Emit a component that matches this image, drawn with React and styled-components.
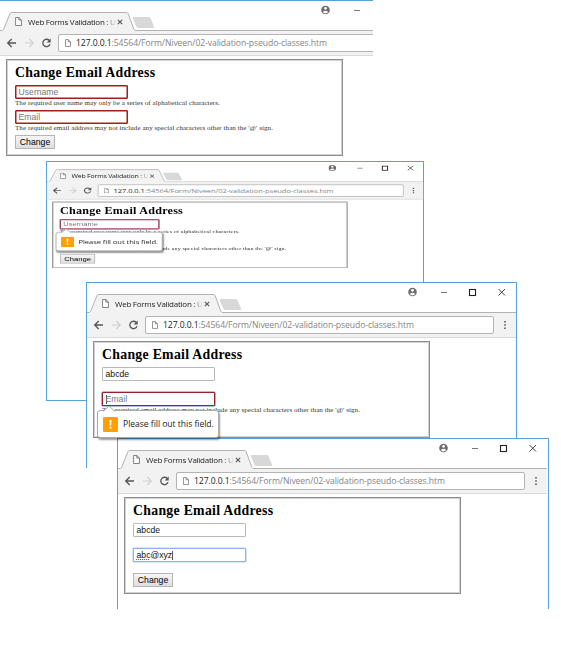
import React from "react";
import styled, { createGlobalStyle, css } from "styled-components";

const GlobalStyle = createGlobalStyle`
  * { box-sizing: border-box; }
  body { margin: 0; background: #fff; overflow: hidden; }
`;

const Desktop = styled.main`
  position: relative;
  width: 561px;
  height: 646px;
  overflow: hidden;
  background: #fff;
`;

const Frame = styled.section`
  position: absolute;
  left: ${(p) => p.$x}px;
  top: ${(p) => p.$y}px;
  width: ${(p) => p.$w}px;
  height: ${(p) => p.$h}px;
  background: #fff;
  border: 1px solid #56a3dc;
  ${(p) => !p.$closed && css`border-bottom: 0;`}
  ${(p) => p.$cut && css`border-left-color: #fff; border-right: 0; overflow: hidden;`}
`;

const Content = styled.div`
  width: 430px;
  margin: -1px 0 0 -1px;
  transform-origin: 0 0;
  ${(p) => p.$squashed && css`transform: scale(0.877, 0.688);`}
`;

const TitleBar = styled.header`
  position: relative;
  display: grid;
  grid-template-columns: 16px 13px 96px 1fr auto;
  height: 31px;
`;

const TabShape = styled.svg`
  position: absolute;
  left: 1px;
  top: 1px;
  width: 429px;
  height: 30px;
`;

const TabIcon = styled.svg`
  position: relative;
  grid-column: 2;
  width: 7px;
  height: 9px;
  margin-top: 17px;
`;

const TabTitle = styled.span`
  position: relative;
  margin-top: 15.5px;
  width: 90px;
  white-space: nowrap;
  font: 8px/12px "Open Sans", sans-serif;
  letter-spacing: -0.25px;
  color: #1c1c1c;
  mask-image: linear-gradient(90deg, #000 78px, transparent 88px);
`;

const TabClose = styled.svg`
  position: relative;
  width: 6px;
  height: 6px;
  margin: 19px 0 0 -7px;
`;

const Controls = styled.svg`
  position: relative;
  width: 108px;
  height: 12px;
  margin: 4px -0.2px 0 0;
`;

const Toolbar = styled.div`
  display: flex;
  align-items: center;
  height: 25px;
  margin-left: 1px;
  padding: 0 0 1px 6px;
  background: #f2f2f2;
  border-bottom: 1px solid #dadada;
`;

const NavIcons = styled.svg`
  flex: none;
  width: 46px;
  height: 12px;
`;

const Address = styled.div`
  display: flex;
  align-items: center;
  width: 349px;
  height: 18px;
  margin: 1px 0 0 6px;
  padding-left: 6px;
  background: #fff;
  border: 1px solid #b4b4b4;
  border-radius: 2px;
  font: 8.6px/16px "Open Sans", sans-serif;
  letter-spacing: -0.075px;
  color: #858585;
  white-space: nowrap;
`;

const AddressIcon = styled.svg`
  width: 6px;
  height: 8px;
  margin-right: 5px;
`;

const Host = styled.span`
  color: #222;
`;

const Menu = styled.svg`
  width: 4px;
  height: 10px;
  margin-left: 9px;
`;

const Panel = styled.div`
  width: 337px;
  height: 97px;
  margin: 3px 0 0 7px;
  padding: 1px 0 0 8px;
  border: 1px solid #8e8e8e;
  box-shadow: inset 0 0 0 1px #d2d2d2;
`;

const Heading = styled.h1`
  margin: 0;
  height: 24px;
  font: bold 13.8px/23px "Liberation Serif", serif;
  letter-spacing: 0.28px;
  color: #000;
  white-space: nowrap;
`;

const Field = styled.div`
  position: relative;
  height: 25px;
`;

const edges = {
  normal: css`border: 1px solid #b9b9b9;`,
  invalid: css`border: 1px solid #a31e18; box-shadow: inset 0 0 0 0.5px #a31e18;`,
  active: css`border: 1px solid #8db2ee; box-shadow: 0 0 0 0.6px #b5ccf5;`,
  required: css`border: 1px solid #93242f; box-shadow: 0 0 0 0.6px #6c7cb8;`,
};

const Input = styled.div`
  display: flex;
  align-items: center;
  width: 113px;
  height: 13.5px;
  padding: 1.5px 0 0 2.6px;
  background: #fff;
  border-radius: 1px;
  ${(p) => edges[p.$edge]}
  font: 8.6px/11px "Liberation Sans", sans-serif;
  color: ${(p) => (p.$placeholder ? "#777" : "#111")};
`;

const Misspelt = styled.span`
  text-decoration: underline dotted #e04040 1px;
  text-underline-offset: 1px;
`;

const Caret = styled.i`
  width: 1px;
  height: 9px;
  margin-right: -1px;
  background: #555;
`;

const Hint = styled.p`
  margin: 0;
  font: 7px/9px "Liberation Serif", serif;
  letter-spacing: 0.065px;
  color: #333;
  white-space: nowrap;
`;

const Button = styled.button`
  display: block;
  width: 40px;
  height: 14px;
  padding: 0;
  border: 1px solid #b5b5b5;
  border-radius: 0;
  background: linear-gradient(#f6f6f6, #dedede);
  font: 8.7px/12px "Liberation Sans", sans-serif;
  color: #000;
`;

const Bubble = styled.div`
  position: absolute;
  z-index: 1;
  left: -5px;
  top: 18px;
  display: flex;
  align-items: center;
  width: 122px;
  height: 28px;
  padding-left: 5px;
  background: #fff;
  border: 1px solid #aaa;
  border-radius: 3px;
  box-shadow: 1px 2px 2px rgba(0, 0, 0, 0.4);
  font: 8.6px/14px "Open Sans", sans-serif;
  letter-spacing: -0.04px;
  color: #222;
  white-space: nowrap;
`;

const BubbleArrow = styled.svg`
  position: absolute;
  left: 4px;
  top: -6px;
  width: 14px;
  height: 7px;
`;

const Warning = styled.svg`
  flex: none;
  width: 15px;
  height: 15px;
  margin-right: 5px;
`;

const PagePath = () => (
  <path d="M.6.5h3.2L6.4 3v5.5H.6zM3.8.5V3h2.6" fill="#fff" stroke="#666" strokeWidth=".8" />
);

const NAME_HINT = "The required user name may only be a series of alphabetical characters.";
const EMAIL_HINT =
  "The required email address may not include any special characters other than the '@' sign.";

function FormField({ value, placeholder, edge, hint, bubble, caret, misspelt }) {
  return (
    <Field>
      <Input $edge={edge} $placeholder={!value}>
        {caret === "start" && <Caret />}
        {misspelt && <Misspelt>{misspelt}</Misspelt>}
        {value || placeholder}
        {caret === "end" && <Caret />}
      </Input>
      {hint && <Hint>{hint}</Hint>}
      {bubble && (
        <Bubble>
          <BubbleArrow viewBox="0 0 14 7">
            <path d="M1 6.5 7 1l6 5.5V7H1z" fill="#fff" />
            <path d="M1 6.5 7 1l6 5.5" fill="none" stroke="#aaa" />
          </BubbleArrow>
          <Warning viewBox="0 0 15 15">
            <rect width="15" height="15" rx="1" fill="#ffa000" />
            <path d="M6.5 3h2l-.3 5.5H6.8zM6.6 9.8h1.8v1.9H6.6z" fill="#fff" />
          </Warning>
          Please fill out this field.
        </Bubble>
      )}
    </Field>
  );
}

function BrowserWindow({ frame, cut, closed, squashed, fields }) {
  const [x, y, w, h] = frame;
  return (
    <Frame $x={x} $y={y} $w={w} $h={h} $cut={cut} $closed={closed}>
      <Content $squashed={squashed}>
        <TitleBar>
          <TabShape viewBox="1 1 429 30">
            <path d="M4 31 11 13.5Q11.5 12.5 13 12.5H127Q128.500 12.500 129 13.500L135 29.500Q135.500 30.500 137 30.500V31z" fill="#f2f2f2" />
            <path d="M1 30.500H3Q4 30.500 4.500 29.500L11 13.500Q11.500 12.500 13 12.500H127Q128.500 12.500 129 13.500L135 29.500Q135.500 30.500 137 30.500H430" fill="none" stroke="#b2b2b2" />
            <path d="M134.500 17H149.500Q151 17 151.500 18L155 26.500Q155.400 28 154 28H139.500Q138 28 137.500 27L133.700 18Q133.400 17 134.500 17z" fill="#d8d8d8" />
          </TabShape>
          <TabIcon viewBox="0 0 7 9"><PagePath /></TabIcon>
          <TabTitle>Web Forms Validation : U</TabTitle>
          <TabClose viewBox="0 0 6 6">
            <path d="m.8.8 4.400 4.400M5.200.8.8 5.200" stroke="#555" strokeWidth="1.100" />
          </TabClose>
          <Controls viewBox="0 0 108 12">
            <circle cx="4.500" cy="6" r="4.300" fill="#6c6c6c" />
            <circle cx="4.500" cy="4.300" r="1.400" fill="#fff" />
            <path d="M1.700 8Q4.500 5.600 7.300 8 4.500 10.800 1.700 8z" fill="#fff" />
            <path d="M33 6.500h6" stroke="#777" />
            <rect x="61.500" y="3.500" width="6" height="6" fill="none" stroke="#222" strokeWidth="1.100" />
            <path d="m90.500 3 6.500 6.500m0-6.500-6.500 6.500" stroke="#333" strokeWidth=".9" />
          </Controls>
        </TitleBar>
        <Toolbar>
          <NavIcons viewBox="7 0 46 12">
            <path d="M17 6H8.800M12.700 2 8.700 6l4 4" fill="none" stroke="#555" strokeWidth="1.300" />
            <path d="M26 6h8M30.200 2l4 4-4 4" fill="none" stroke="#d0d0d0" strokeWidth="1.200" />
            <path d="M50.300 3.500A3.700 3.700 0 1 0 51 7.200" fill="none" stroke="#555" strokeWidth="1.300" />
            <path d="M51.700 1.500v4h-4z" fill="#555" />
          </NavIcons>
          <Address>
            <AddressIcon viewBox="0 0 7 9"><PagePath /></AddressIcon>
            <Host>127.0.0.1</Host>:54564/Form/Niveen/02-validation-pseudo-classes.htm
          </Address>
          <Menu viewBox="0 0 4 10">
            <path d="M1.200 1h1.600v1.600H1.200zM1.200 4.200h1.600v1.600H1.200zM1.200 7.400h1.600V9H1.200z" fill="#555" />
          </Menu>
        </Toolbar>
        <Panel>
          <Heading>Change Email Address</Heading>
          {fields.map((field, i) => <FormField key={i} {...field} />)}
          <Button type="button">Change</Button>
        </Panel>
      </Content>
    </Frame>
  );
}

const username = { placeholder: "Username", edge: "invalid", hint: NAME_HINT };
const email = { placeholder: "Email", edge: "invalid", hint: EMAIL_HINT };
const filledName = { value: "abcde", edge: "normal" };

export default function App() {
  return (
    <>
      <GlobalStyle />
      <Desktop>
        <BrowserWindow frame={[-1, 0, 374, 160]} cut fields={[username, email]} />
        <BrowserWindow
          frame={[46, 161, 378, 240]}
          closed
          squashed
          fields={[{ ...username, edge: "required", bubble: true }, email]}
        />
        <BrowserWindow
          frame={[86, 282, 431, 186]}
          fields={[filledName, { ...email, edge: "required", bubble: true, caret: "start" }]}
        />
        <BrowserWindow
          frame={[117, 438, 432, 171]}
          fields={[filledName, { misspelt: "abc", value: "@xyz", edge: "active", caret: "end" }]}
        />
      </Desktop>
    </>
  );
}
